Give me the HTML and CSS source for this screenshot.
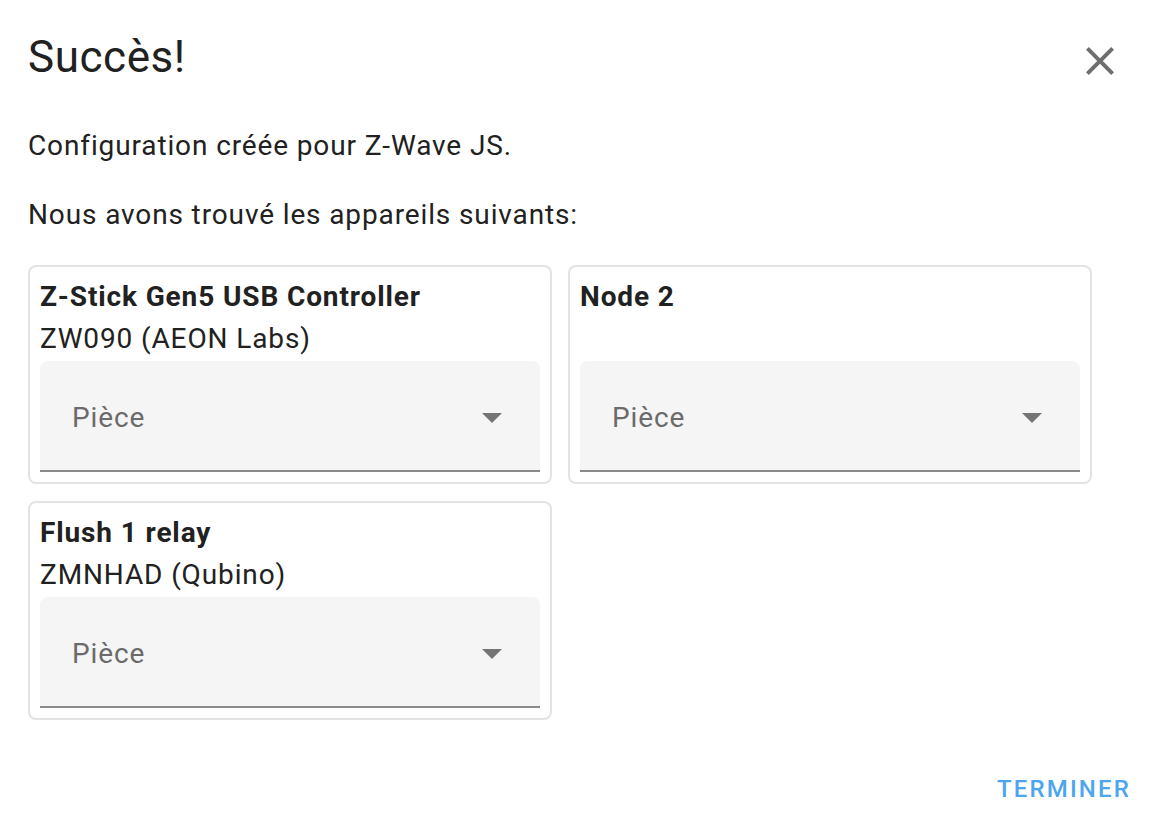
FILE: index.html
```html
<!DOCTYPE html>
<html lang="fr">
<head>
<meta charset="utf-8">
<title>Succès!</title>
<link rel="stylesheet" href="styles.css">
</head>
<body>
<div class="dialog">
  <header class="header">
    <h2 class="title">Succès!</h2>
    <button class="close" aria-label="Fermer">
      <svg viewBox="0 0 24 24" width="48" height="48"><path d="M19,6.41L17.59,5L12,10.59L6.41,5L5,6.41L10.59,12L5,17.59L6.41,19L12,13.41L17.59,19L19,17.59L13.41,12L19,6.41Z"/></svg>
    </button>
  </header>
  <p class="text first">Configuration créée pour Z-Wave JS.</p>
  <p class="text second">Nous avons trouvé les appareils suivants:</p>
  <div class="devices">
    <div class="card">
      <div class="name">Z-Stick Gen5 USB Controller</div>
      <div class="model">ZW090 (AEON Labs)</div>
      <div class="select"><span class="label">Pièce</span><span class="arrow"></span></div>
    </div>
    <div class="card">
      <div class="name">Node 2</div>
      <div class="model"></div>
      <div class="select"><span class="label">Pièce</span><span class="arrow"></span></div>
    </div>
    <div class="card">
      <div class="name">Flush 1 relay</div>
      <div class="model">ZMNHAD (Qubino)</div>
      <div class="select"><span class="label">Pièce</span><span class="arrow"></span></div>
    </div>
  </div>
  <div class="actions">
    <button class="finish">Terminer</button>
  </div>
</div>
</body>
</html>
```
FILE: styles.css
```css
html, body {
  margin: 0;
  padding: 0;
  background: #ffffff;
}
body {
  font-family: Roboto, "Noto Sans", sans-serif;
  color: #212121;
}
.dialog {
  padding: 0 28px;
}
.header {
  display: flex;
  justify-content: space-between;
  align-items: flex-start;
}
.title {
  margin: 31px 0 0;
  font-size: 44px;
  line-height: 52px;
  font-weight: 400;
  letter-spacing: 0.0125em;
  color: #212121;
}
.close {
  margin-top: 37px;
  padding: 0;
  border: 0;
  background: none;
  width: 48px;
  height: 48px;
  fill: #6f6f6f;
}
.close svg {
  display: block;
}
.text {
  margin: 0;
  font-size: 28px;
  line-height: 40px;
  letter-spacing: 0.03125em;
}
.first {
  margin-top: 41px;
}
.second {
  margin-top: 29px;
}
.devices {
  margin-top: 30px;
  display: grid;
  grid-template-columns: 524px 524px;
  column-gap: 16px;
  row-gap: 17px;
}
.card {
  border: 2px solid #e3e3e3;
  border-radius: 8px;
  padding: 10px;
  display: flex;
  flex-direction: column;
}
.name {
  font-size: 28px;
  line-height: 40px;
  font-weight: 700;
  letter-spacing: 0.03125em;
}
.model {
  font-size: 28px;
  line-height: 44px;
  height: 44px;
  letter-spacing: 0.03125em;
}
.select {
  height: 111px;
  box-sizing: border-box;
  background: #f5f5f5;
  border-radius: 8px 8px 0 0;
  border-bottom: 2px solid #8a8a8a;
  display: flex;
  align-items: center;
  justify-content: space-between;
  padding: 4px 38px 0 32px;
}
.label {
  font-size: 28px;
  letter-spacing: 0.03125em;
  color: #6b6b6b;
}
.arrow {
  width: 0;
  height: 0;
  border-left: 10px solid transparent;
  border-right: 10px solid transparent;
  border-top: 10px solid #757575;
}
.actions {
  display: flex;
  justify-content: flex-end;
  margin-top: 49px;
}
.finish {
  border: 0;
  background: none;
  padding: 0;
  margin-right: -7px;
  font-family: Roboto, "Noto Sans", sans-serif;
  font-size: 24px;
  line-height: 40px;
  font-weight: 500;
  letter-spacing: 0.0892857em;
  text-transform: uppercase;
  color: #4ba6ef;
}
```
